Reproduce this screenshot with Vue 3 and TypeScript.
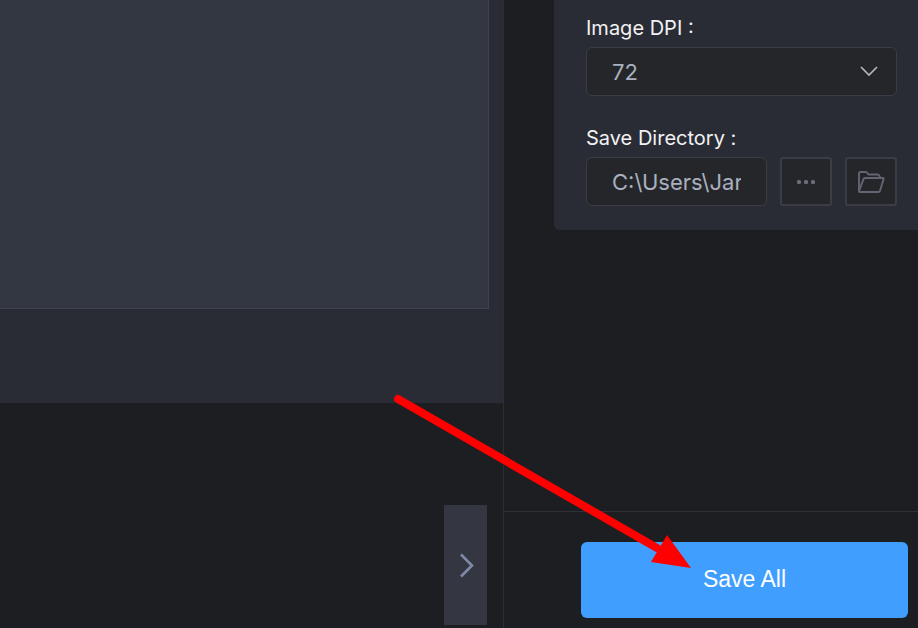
<script setup lang="ts">
import { ref } from 'vue'

const dpi = ref<string>('72')
const dpiOptions: string[] = ['72', '96', '150', '300']
const directory = ref<string>('C:\\Users\\Jar')
</script>

<template>
  <div class="app">
    <main class="workspace">
      <section class="stage">
        <div class="canvas"></div>
      </section>
      <section class="strip">
        <button class="next" type="button" aria-label="Next">
          <svg width="16" height="26" viewBox="0 0 16 26" fill="none">
            <path d="M2 2.500L13 13.500L2 24.500" stroke="#7f8ba6" stroke-width="2.6" />
          </svg>
        </button>
      </section>
    </main>

    <aside class="sidebar">
      <form class="settings" @submit.prevent>
        <div class="field">
          <label for="dpi">Image DPI :</label>
          <div class="select">
            <select id="dpi" v-model="dpi">
              <option v-for="option in dpiOptions" :key="option" :value="option">{{ option }}</option>
            </select>
            <svg class="chevron" width="20" height="12" viewBox="0 0 20 12" fill="none">
              <path d="M2 1L10 9L18 1" stroke="#b3b7bf" stroke-width="1.7" />
            </svg>
          </div>
        </div>

        <div class="field">
          <label for="directory">Save Directory :</label>
          <div class="row">
            <input id="directory" v-model="directory" type="text" />
            <button class="square" type="button" aria-label="Browse">
              <svg width="20" height="6" viewBox="0 0 20 6" fill="#6d6e7b">
                <rect x="1" y="1" width="4" height="4" rx="1.500" />
                <rect x="8" y="1" width="4" height="4" rx="1.500" />
                <rect x="15" y="1" width="4" height="4" rx="1.500" />
              </svg>
            </button>
            <button class="square" type="button" aria-label="Open folder">
              <svg width="28" height="24" viewBox="1 0 28 24" fill="none" stroke="#646572" stroke-width="1.9" stroke-linejoin="round">
                <path d="M3 21V3.500Q3 2 4.500 2H9.500Q10.500 2 11 2.700L12.500 4.500H21.500Q23 4.500 23.500 6L24 8" />
                <path d="M3 21L7.500 9.200Q8 8 9.300 8H26.500Q28 8 27.500 9.500L24 20.800Q23.500 22 22.300 22H4Q3 22 3 21Z" />
              </svg>
            </button>
          </div>
        </div>
      </form>

      <footer class="actions">
        <button class="save" type="button">Save All</button>
      </footer>
    </aside>

    <svg class="pointer" width="296" height="178" viewBox="0 0 296 178" aria-hidden="true">
      <path d="M5 6L264 155" stroke="#ff0000" stroke-width="8" stroke-linecap="round" />
      <path d="M274 142L298 175L258 169Z" fill="#ff0000" />
    </svg>
  </div>
</template>

<style>
body {
  margin: 0;
  background: #1d1e21;
}
</style>

<style scoped>
.app {
  position: relative;
  display: grid;
  grid-template-columns: minmax(0, 1fr) 414px;
  min-height: 100vh;
  overflow: hidden;
  background: #1d1e21;
  font-family: Inter, "Liberation Sans", sans-serif;
}

.app *,
.app *::before {
  box-sizing: border-box;
}

.workspace {
  display: grid;
  grid-template-rows: minmax(0, 1fr) 225px;
  border-right: 1px solid #2d2e35;
}

.stage {
  display: grid;
  padding: 0 14px 94px 0;
  background: #2a2c35;
}

.canvas {
  background: #333741;
  border: solid #40434f;
  border-width: 0 1px 1px 0;
}

.strip {
  display: flex;
  justify-content: flex-end;
  padding: 102px 16px 3px 0;
}

.next {
  display: flex;
  align-items: center;
  justify-content: center;
  width: 43px;
  padding: 0 0 0 3px;
  border: 0;
  background: #343641;
}

.sidebar {
  display: flex;
  flex-direction: column;
  justify-content: space-between;
}

.settings {
  display: grid;
  gap: 30px;
  margin-left: 50px;
  padding: 16px 21px 24px 32px;
  border-bottom-left-radius: 6px;
  background: #2a2c35;
}

.field {
  display: grid;
  gap: 7px;
}

label {
  color: #f2f2f3;
  font-size: 20px;
  line-height: 24px;
}

.row {
  display: flex;
  gap: 13px;
}

.select {
  display: grid;
  align-items: center;
}

.select > * {
  grid-area: 1 / 1;
}

.chevron {
  justify-self: end;
  margin-right: 18px;
  pointer-events: none;
}

select,
input {
  flex: 1;
  width: 100%;
  min-width: 0;
  height: 49px;
  margin: 0;
  padding: 0 25px;
  border: 1px solid #3b3d46;
  border-radius: 6px;
  outline: 0;
  appearance: none;
  background: #25262a;
  color: #a9b0bf;
  font: 22px Inter, "Liberation Sans", sans-serif;
}

.square {
  display: flex;
  align-items: center;
  justify-content: center;
  width: 52px;
  height: 49px;
  padding: 0;
  border: 2px solid #3a3d46;
  border-radius: 3px;
  background: #25262a;
}

.actions {
  display: grid;
  padding: 30px 10px 10px 77px;
  border-top: 1px solid #303138;
}

.save {
  height: 76px;
  padding: 0 0 2px;
  border: 0;
  border-radius: 6px;
  background: #409eff;
  color: #fff;
  font: 23px "Liberation Sans", sans-serif;
}

.pointer {
  position: absolute;
  left: 393px;
  top: 393px;
  overflow: visible;
  pointer-events: none;
}
</style>
